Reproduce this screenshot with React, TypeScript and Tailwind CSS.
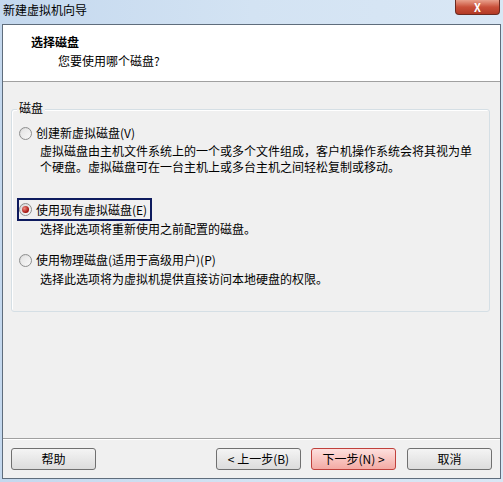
const font = "font-['Noto_Sans_CJK_SC','Noto_Sans',sans-serif]";

function Radio({ checked }: { checked?: boolean }) {
  return (
    <span className="flex h-[13px] w-[13px] shrink-0 items-center justify-center rounded-full border border-[#8e8f8f] bg-gradient-to-br from-[#d6d6d6] to-[#fbfbfb]">
      {checked ? (
        <span className="h-[7px] w-[7px] rounded-full bg-[radial-gradient(circle_at_35%_35%,#f08a80,#a3100b_70%)]" />
      ) : (
        <span className="h-[9px] w-[9px] rounded-full bg-gradient-to-br from-[#e4e4e4] to-[#f7f7f7]" />
      )}
    </span>
  );
}

function Btn({ label, primary }: { label: string; primary?: boolean }) {
  return (
    <div
      className={
        primary
          ? "flex h-[22px] w-[85px] items-center justify-center rounded-[3px] border border-[#c0413c] bg-gradient-to-b from-[#fde0de] to-[#f3aaa4] text-[12px] text-black"
          : "flex h-[22px] w-[85px] items-center justify-center rounded-[3px] border border-[#707070] bg-gradient-to-b from-[#f4f4f4] to-[#dcdcdc] text-[12px] text-black"
      }
    >
      {label}
    </div>
  );
}

export default function App() {
  return (
    <div className={`flex h-[482px] w-[503px] flex-col bg-gradient-to-r from-[#c4d8ee] via-[#d3e3f3] to-[#d9e7f5] ${font}`}>
      <div className="flex h-[24px] shrink-0 items-start justify-between">
        <span className="ml-[3px] mt-[2px] text-[12px] leading-[16px] text-black">新建虚拟机向导</span>
        <div className="mr-[3px] flex h-[15px] w-[45px] items-center justify-center rounded-b-[4px] border border-t-0 border-[#6b2a20] bg-gradient-to-b from-[#e8a08c] via-[#c9503a] to-[#b33a25] text-[11px] font-bold leading-none text-white">
          X
        </div>
      </div>
      <div className="mx-[2px] mb-[3px] flex flex-1 flex-col border border-[#5f6d7c] bg-[#f0f0f0]">
        <div className="flex h-[57px] shrink-0 flex-col border-b border-[#a0a0a0] bg-white">
          <span className="ml-[28px] mt-[9px] text-[12px] font-bold leading-[15px] text-black">选择磁盘</span>
          <span className="ml-[55px] mt-[4px] text-[12px] leading-[15px] text-black">您要使用哪个磁盘?</span>
        </div>
        <div className="flex flex-1 flex-col">
          <div className="relative ml-[8px] mr-[10px] mt-[27px] flex h-[203px] flex-col rounded-[3px] border border-[#d5dfe5] px-[7px] shadow-[inset_1px_1px_0_#ffffff]">
            <span className="absolute -top-[10px] left-[5px] bg-[#f0f0f0] px-[2px] text-[12px] leading-[16px] text-black">磁盘</span>
            <div className="mt-[15px] flex h-[16px] items-center gap-[4px] text-[12px] text-black">
              <Radio />
              <span>创建新虚拟磁盘(V)</span>
            </div>
            <div className="ml-[21px] mt-[2px] text-[12px] leading-[16px] text-black">
              <div>虚拟磁盘由主机文件系统上的一个或多个文件组成，客户机操作系统会将其视为单</div>
              <div>个硬盘。虚拟磁盘可在一台主机上或多台主机之间轻松复制或移动。</div>
            </div>
            <div className="relative mt-[25px] flex h-[19px] items-center gap-[4px] text-[12px] text-black">
              <Radio checked />
              <span>使用现有虚拟磁盘(E)</span>
              <div className="absolute -left-[2px] -top-[2px] h-[23px] w-[135px] border-2 border-[#0e1b5e]" />
            </div>
            <div className="ml-[21px] mt-[2px] text-[12px] leading-[15px] text-black">选择此选项将重新使用之前配置的磁盘。</div>
            <div className="mt-[16px] flex h-[16px] items-center gap-[4px] text-[12px] text-black">
              <Radio />
              <span>使用物理磁盘(适用于高级用户)(P)</span>
            </div>
            <div className="ml-[21px] mt-[3px] text-[12px] leading-[15px] text-black">选择此选项将为虚拟机提供直接访问本地硬盘的权限。</div>
          </div>
        </div>
        <div className="h-[2px] shrink-0 border-t border-[#a0a0a0] bg-white" />
        <div className="flex h-[38px] shrink-0 items-start px-[8px] pt-[8px]">
          <Btn label="帮助" />
          <div className="flex-1" />
          <Btn label="< 上一步(B)" />
          <div className="w-[10px]" />
          <Btn label="下一步(N) >" primary />
          <div className="w-[11px]" />
          <Btn label="取消" />
        </div>
      </div>
    </div>
  );
}
